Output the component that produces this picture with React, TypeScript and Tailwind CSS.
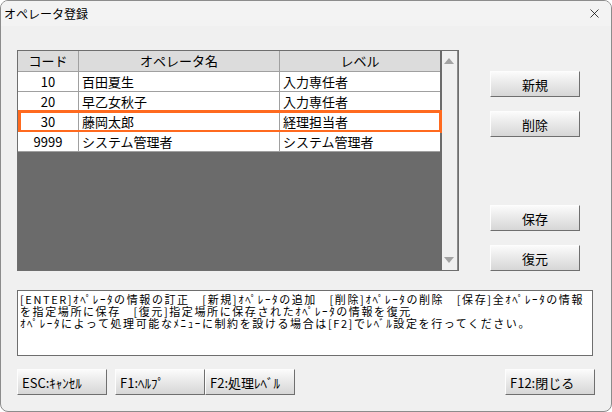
import { X } from "lucide-react";

const font = { fontFamily: '"Noto Sans CJK JP", "Noto Sans", sans-serif' };

const rows = [
  { code: "10", name: "百田夏生", level: "入力専任者" },
  { code: "20", name: "早乙女秋子", level: "入力専任者" },
  { code: "30", name: "藤岡太郎", level: "経理担当者", selected: true },
  { code: "9999", name: "システム管理者", level: "システム管理者" },
];

function Btn({ label, className = "" }: { label: string; className?: string }) {
  return (
    <button
      className={`h-[26px] border border-t-[#fdfdfd] border-l-[#fdfdfd] border-b-[#6f6f6f] border-r-[#6f6f6f] bg-gradient-to-b from-[#fbfbfb] to-[#d6d6d6] text-[13px] font-normal text-black leading-none ${className}`}
    >
      {label}
    </button>
  );
}

function Table() {
  return (
    <div className="flex h-[221px] w-[442px] border border-[#6e6e6e]">
      <div className="relative h-full w-[422px] bg-[#6b6b6b]">
        <div className="grid h-[21px] grid-cols-[61px_201px_160px] border-b border-[#a0a0a0] bg-[#dcdcdc] text-[13px]">
          <div className="flex items-center justify-center border-r border-[#a0a0a0]">コード</div>
          <div className="flex items-center justify-center border-r border-[#a0a0a0]">オペレータ名</div>
          <div className="flex items-center justify-center">レベル</div>
        </div>
        {rows.map((r) => (
          <div
            key={r.code}
            className="relative grid h-[20px] grid-cols-[61px_201px_160px] border-b border-[#a0a0a0] bg-white text-[13px]"
          >
            <div className="flex items-center justify-center border-r border-[#a0a0a0]">{r.code}</div>
            <div className="flex items-center border-r border-[#a0a0a0] pl-[3px]">{r.name}</div>
            <div className="flex items-center pl-[3px]">{r.level}</div>
            {r.selected && (
              <div className="pointer-events-none absolute left-0 top-[-2px] h-[23px] w-[424px] border-[3px] border-[#ff6a1f]" />
            )}
          </div>
        ))}
      </div>
      <div className="h-full w-[2px] bg-[#6b6b6b]" />
      <div className="flex h-full w-[17px] flex-col items-center justify-between border-r border-[#8a8a8a] bg-[#f0f0f0] py-[7px]">
        <div className="h-0 w-0 border-x-[5px] border-b-[6px] border-x-transparent border-b-[#a3a3a3]" />
        <div className="h-0 w-0 border-x-[5px] border-t-[6px] border-x-transparent border-t-[#a3a3a3]" />
      </div>
    </div>
  );
}

export default function App() {
  return (
    <div
      className="flex h-[412px] w-[612px] flex-col overflow-hidden rounded-[8px] border border-[#8c8c8c] bg-[#f0f0f0] text-black"
      style={font}
    >
      <div className="flex h-[25px] items-center justify-between bg-[#f3f3f3] pl-[3px] pr-[9px]">
        <span className="text-[12px]">オペレータ登録</span>
        <X size={15} strokeWidth={1.2} />
      </div>
      <div className="flex flex-col pl-[16px] pt-[24px]">
        <div className="flex">
          <Table />
          <div className="ml-[31px] flex flex-col pt-[21px]">
            <Btn label="新規" className="w-[90px]" />
            <Btn label="削除" className="mt-[14px] w-[90px]" />
            <Btn label="保存" className="mt-[68px] w-[90px]" />
            <Btn label="復元" className="mt-[14px] w-[90px]" />
          </div>
        </div>
        <div className="mt-[19px] flex h-[66px] w-[576px] flex-col border border-[#6e6e6e] bg-white px-[2px] pt-[2px] text-[11px] leading-[12px] tracking-[1.6px]">
          <span className="whitespace-nowrap">[ENTER]ｵﾍﾟﾚｰﾀの情報の訂正　[新規]ｵﾍﾟﾚｰﾀの追加　[削除]ｵﾍﾟﾚｰﾀの削除　[保存]全ｵﾍﾟﾚｰﾀの情報</span>
          <span className="whitespace-nowrap">を指定場所に保存　[復元]指定場所に保存されたｵﾍﾟﾚｰﾀの情報を復元</span>
          <span className="whitespace-nowrap">ｵﾍﾟﾚｰﾀによって処理可能なﾒﾆｭｰに制約を設ける場合は[F2]でﾚﾍﾞﾙ設定を行ってください。</span>
        </div>
        <div className="mt-[13px] flex">
          <Btn label="ESC:ｷｬﾝｾﾙ" className="w-[90px] pl-[4px] text-left text-[12px]" />
          <Btn label="F1:ﾍﾙﾌﾟ" className="ml-[8px] w-[90px] pl-[4px] text-left text-[12px]" />
          <Btn label="F2:処理ﾚﾍﾞﾙ" className="w-[90px] pl-[4px] text-left text-[12px]" />
          <Btn label="F12:閉じる" className="ml-[210px] w-[90px] pl-[4px] text-left text-[12px]" />
        </div>
      </div>
    </div>
  );
}
